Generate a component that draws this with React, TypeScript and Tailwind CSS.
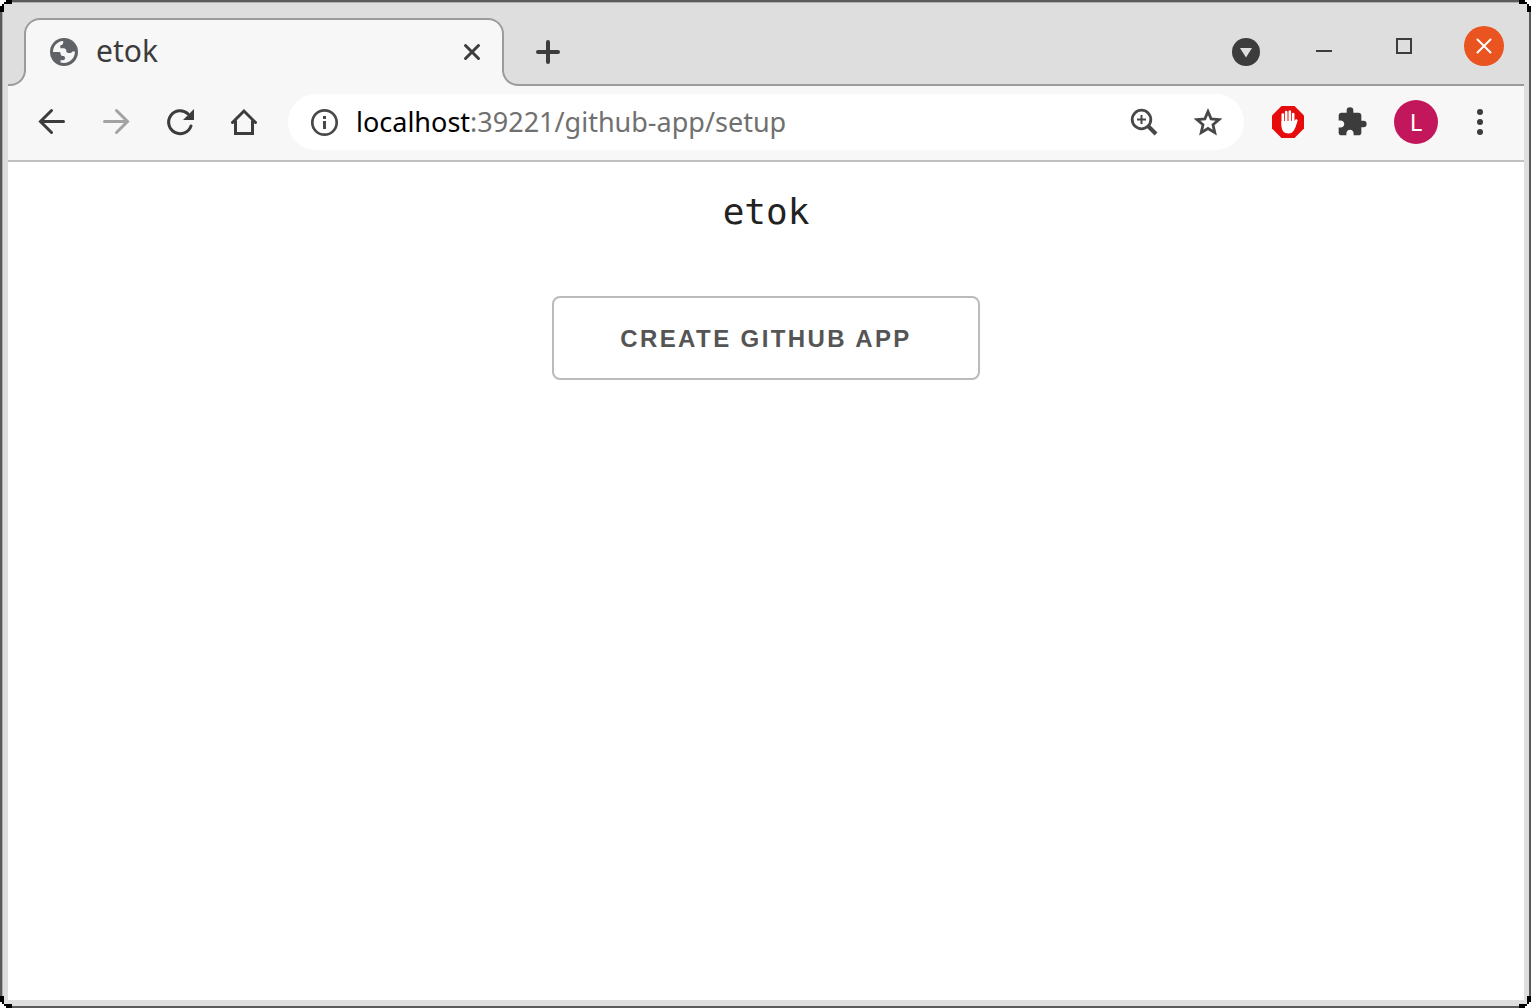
import type { ReactNode } from "react";
import { MdExtension } from "react-icons/md";

function IconButton({ label, className, children }: { label: string; className: string; children: ReactNode }) {
  return (
    <button type="button" aria-label={label} className={`flex shrink-0 items-center justify-center ${className}`}>
      {children}
    </button>
  );
}

function Stroke({ d, size = 32, width = 3, className = "" }: { d: string; size?: number; width?: number; className?: string }) {
  return (
    <svg
      width={size}
      height={size}
      viewBox={`0 0 ${size} ${size}`}
      fill="none"
      stroke="currentColor"
      strokeWidth={width}
      strokeLinecap="round"
      className={`shrink-0 ${className}`}
    >
      <path d={d} />
    </svg>
  );
}

function Globe() {
  return (
    <svg width="28" height="28" viewBox="0 0 28 28" className="shrink-0 text-[#5f6368]">
      <circle cx="14" cy="14" r="14" fill="currentColor" />
      <path
        fill="#f7f7f7"
        d="M3 14C3 8.500 7 3.400 13.200 3.100V4.500C13.200 6.200 12.300 7 10.300 7.200V10.200H13.500C15.300 10.200 16.300 11 16.300 12.800C16.300 14.300 17 15 18.500 15H20C21.500 15 22 14.300 22.300 13.600H25C25 20 20 25 14 25C12.800 25 11.500 24.800 10.500 24.500V22.200H12.500C14.300 22.200 15 21.500 15 20C15 18.600 14.300 18 13 18C11.300 18 10.700 17.300 10.700 16C10.700 14.600 10 14 8.700 14Z"
      />
    </svg>
  );
}

function Hand() {
  return (
    <svg width="32" height="32" viewBox="0 0 32 32">
      <path fill="#e60c0c" d="M9.500 0H22.500L32 9.500V22.500L22.500 32H9.500L0 22.500V9.500Z" />
      <g stroke="#fff" strokeWidth="2.600" strokeLinecap="round" fill="none">
        <path d="M10.800 8.500V19M14.200 6V17M17.800 5.500V17M21.200 8V19M24.300 14.500L22 21" />
      </g>
      <path fill="#fff" d="M9.500 15H22.500L24.500 17C23.500 20 23 23 21.500 25C20.300 26.700 18.500 27.500 16.500 27.500C12 27.500 9.500 24.500 9.500 20Z" />
    </svg>
  );
}

function Corner({ className }: { className: string }) {
  return (
    <svg width="12" height="12" viewBox="0 0 12 12" shapeRendering="crispEdges" className={`absolute ${className}`}>
      <path fill="#fff" d="M0 0H6V4H4V6H0Z" />
      <path d="M6 0H12V4H6ZM4 2H6V4H4ZM2 4H4V6H2ZM0 6H4V12H0Z" />
    </svg>
  );
}

function TabStrip() {
  return (
    <div className="flex h-[83px] items-end">
      <div className="z-10 bg-[#f7f7f7]">
        <div className="h-8 w-[18px] rounded-br-[16px] border-r-2 border-b-2 border-[#9b9b9b] bg-[#dedede]" />
      </div>
      <div className="-mx-0.5 flex h-[68px] w-[480px] items-center rounded-t-[16px] border-x-2 border-t-2 border-[#9b9b9b] bg-[#f7f7f7] pr-3.5 pb-0.5 pl-6">
        <Globe />
        <span className="ml-[18px] flex-1 pb-0.5 font-['Noto_Sans'] text-[30px] leading-8 text-[#3c3c3c]">etok</span>
        <IconButton label="Close tab" className="size-8 text-[#3c3c3c]">
          <Stroke d="M9.500 9.500L22.500 22.500M22.500 9.500L9.500 22.500" />
        </IconButton>
      </div>
      <div className="z-10 bg-[#f7f7f7]">
        <div className="h-8 w-[18px] rounded-bl-[16px] border-b-2 border-l-2 border-[#9b9b9b] bg-[#dedede]" />
      </div>
      <div className="flex h-full flex-1 items-center border-b-2 border-[#9b9b9b] pr-5 pl-3">
        <IconButton label="New tab" className="mt-4 size-8 text-[#3c3c3c]">
          <Stroke d="M16 6V26M6 16H26" width={4} />
        </IconButton>
        <div className="ml-auto flex items-center gap-10">
          <IconButton label="Search tabs" className="mt-4 size-8">
            <svg width="28" height="28" viewBox="0 0 28 28">
              <circle cx="14" cy="14" r="14" fill="#3c3c3c" />
              <path d="M8 10H20L14 19.500Z" fill="#dedede" />
            </svg>
          </IconButton>
          <IconButton label="Minimize" className="mt-1 ml-0.5 size-10 text-[#3c3c3c]">
            <span className="mt-2.5 h-0.5 w-4 bg-[#3c3c3c]" />
          </IconButton>
          <IconButton label="Maximize" className="mt-1 size-10">
            <span className="size-4 border-2 border-[#3c3c3c]" />
          </IconButton>
          <IconButton label="Close window" className="mt-1 size-10 rounded-full bg-[#e95420] text-white">
            <Stroke d="M9.500 9.500L22.500 22.500M22.500 9.500L9.500 22.500" width={2} />
          </IconButton>
        </div>
      </div>
    </div>
  );
}

function Toolbar() {
  return (
    <div className="flex h-[76px] items-center border-b-2 border-[#c0c0c0] bg-[#f7f7f7] pr-7 pb-0.5 pl-7 text-[#3c3c3c]">
      <div className="flex gap-8">
        <IconButton label="Back" className="size-8">
          <Stroke d="M27.500 15.500H5M15.500 4.500L4.500 15.500L15.500 26.500" />
        </IconButton>
        <IconButton label="Forward" className="size-8 text-[#a3a3a3]">
          <Stroke d="M4.500 15.500H27M16.500 4.500L27.500 15.500L16.500 26.500" />
        </IconButton>
        <IconButton label="Reload" className="size-8">
          <svg width="32" height="32" viewBox="0 0 32 32" fill="none" stroke="currentColor" strokeWidth="3" strokeLinecap="round">
            <path d="M27 20A11.500 11.500 0 1 1 24 7.800" />
            <path d="M30 3V14H19Z" fill="currentColor" stroke="none" />
          </svg>
        </IconButton>
        <IconButton label="Home" className="size-8">
          <Stroke d="M4.500 16.500L16 5L27.500 16.500M7.500 15V27.500H24.500V15" />
        </IconButton>
      </div>
      <div className="ml-7 flex h-14 flex-1 items-center rounded-full bg-white pr-5 pl-5 text-[#484848]">
        <IconButton label="View site information" className="size-8">
          <svg width="32" height="32" viewBox="0 0 32 32">
            <circle cx="16.500" cy="16.500" r="12.200" fill="none" stroke="currentColor" strokeWidth="2.700" />
            <path fill="currentColor" d="M15 10H18V13H15ZM15 15H18V23H15Z" />
          </svg>
        </IconButton>
        <div className="ml-4 flex-1 font-['Noto_Sans'] text-[27px] leading-8 text-[#707070]">
          <span className="text-black">localhost</span>:39221/github-app/setup
        </div>
        <IconButton label="Zoom" className="size-8">
          <svg width="32" height="32" viewBox="0 0 32 32" fill="none" stroke="currentColor">
            <circle cx="13.500" cy="13.500" r="9.300" strokeWidth="2.800" />
            <path d="M13.500 9V18M9 13.500H18" strokeWidth="2" />
            <path d="M20 20L28 28" strokeWidth="4" />
          </svg>
        </IconButton>
        <IconButton label="Bookmark this page" className="ml-8 size-8">
          <svg width="32" height="32" viewBox="0 0 32 32" fill="none" stroke="currentColor" strokeWidth="2.800">
            <path d="M16 5.500L19.100 12.900L27 13.600L21 18.800L22.800 26.600L16 22.500L9.200 26.600L11 18.800L5 13.600L12.900 12.900Z" />
          </svg>
        </IconButton>
      </div>
      <IconButton label="Ad blocker" className="ml-7 size-8">
        <Hand />
      </IconButton>
      <IconButton label="Extensions" className="ml-8 size-8">
        <MdExtension className="size-8 shrink-0" />
      </IconButton>
      <IconButton label="Profile" className="ml-[26px] size-11 rounded-full bg-[#c2185b] font-['Noto_Sans'] text-2xl text-white">
        L
      </IconButton>
      <IconButton label="Menu" className="ml-[26px] size-8">
        <svg width="32" height="32" viewBox="0 0 32 32" fill="currentColor">
          <circle cx="16" cy="6" r="3" />
          <circle cx="16" cy="16" r="3" />
          <circle cx="16" cy="26" r="3" />
        </svg>
      </IconButton>
    </div>
  );
}

export default function App() {
  return (
    <div className="relative flex min-h-screen flex-col border-2 border-[#5a5a5a] bg-[#dedede]">
      <div className="flex flex-1 flex-col border-t border-l border-[#b0b0b0] pr-[5px] pb-1.5 pl-[5px]">
        <TabStrip />
        <Toolbar />
        <main className="flex flex-1 flex-col items-center bg-white pt-6">
          <h1 className="font-['DejaVu_Sans_Mono'] text-4xl leading-[52px] text-[#222222]">etok</h1>
          <button
            type="button"
            className="mt-[58px] h-[84px] rounded-lg border-2 border-[#bbbbbb] px-[66px] pt-0.5 font-['Liberation_Sans'] text-2xl font-bold tracking-widest text-[#555555] uppercase"
          >
            Create GitHub App
          </button>
        </main>
      </div>
      <Corner className="-top-0.5 -left-0.5" />
      <Corner className="-top-0.5 -right-0.5 -scale-x-100" />
      <Corner className="-bottom-0.5 -left-0.5 -scale-y-100" />
      <Corner className="-right-0.5 -bottom-0.5 rotate-180" />
    </div>
  );
}
